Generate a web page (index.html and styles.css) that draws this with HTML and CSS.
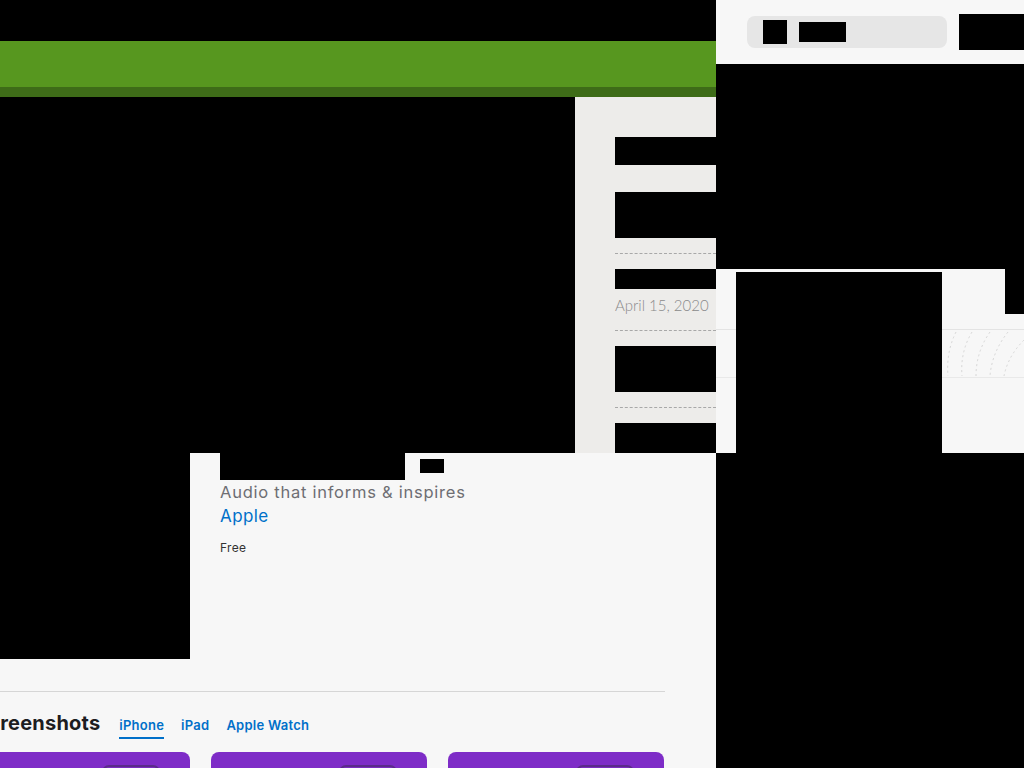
FILE: index.html
```html
<!DOCTYPE html>
<html lang="en">
<head>
<meta charset="utf-8">
<title>Collage</title>
<link rel="stylesheet" href="styles.css">
</head>
<body>
<div class="desk">
  <section class="tile banner">
    <div class="banner-main"></div>
    <div class="banner-foot"></div>
  </section>

  <section class="tile topbar">
    <div class="search">
      <span class="redact search-icon"></span>
      <span class="redact search-label"></span>
    </div>
    <span class="redact topbar-btn"></span>
  </section>

  <section class="tile sidebar">
    <div class="redact side-title"></div>
    <div class="redact side-block"></div>
    <div class="side-rule"></div>
    <div class="redact side-line"></div>
    <div class="side-date">April 15, 2020</div>
    <div class="side-rule"></div>
    <div class="redact side-block"></div>
    <div class="side-rule"></div>
    <div class="redact side-tail"></div>
  </section>

  <section class="tile media">
    <div class="redact media-corner"></div>
    <div class="media-band">
      <svg class="arcs" width="82" height="48" viewBox="0 0 82 48" aria-hidden="true">
        <g fill="none" stroke="#d6d6d6" stroke-width="1" stroke-dasharray="2 3">
          <path d="M14 2 Q4 22 6 46"/>
          <path d="M30 2 Q18 22 20 46"/>
          <path d="M48 2 Q34 22 34 46"/>
          <path d="M66 2 Q50 22 48 46"/>
          <path d="M82 10 Q66 26 62 46"/>
        </g>
      </svg>
    </div>
    <div class="redact media-photo"></div>
  </section>

  <section class="tile app">
    <div class="app-head">
      <div class="redact app-icon"></div>
      <div class="app-info">
        <div class="app-titlerow">
          <span class="redact app-title"></span>
          <span class="redact app-badge"></span>
        </div>
        <p class="app-sub">Audio that informs &amp; inspires</p>
        <a class="app-dev" href="#">Apple</a>
        <p class="app-price">Free</p>
      </div>
    </div>
    <hr class="app-rule">
    <div class="shots-head">
      <h2 class="shots-title">Screenshots</h2>
      <nav class="shots-tabs">
        <a class="tab active" href="#">iPhone</a>
        <a class="tab" href="#">iPad</a>
        <a class="tab" href="#">Apple Watch</a>
      </nav>
    </div>
    <div class="shots">
      <div class="shot first"><span class="notch"></span></div>
      <div class="shot"><span class="notch"></span></div>
      <div class="shot"><span class="notch"></span></div>
    </div>
  </section>
</div>
</body>
</html>
```

FILE: styles.css
```css
* { box-sizing: border-box; }
html, body { margin: 0; padding: 0; }
body {
  background: #000;
  width: 1024px;
  height: 768px;
  overflow: hidden;
  font-family: Inter, "Liberation Sans", sans-serif;
}
.desk { position: relative; width: 1024px; height: 768px; }
.tile { position: absolute; overflow: hidden; }
.redact { background: #000; display: block; }

/* green banner */
.banner { left: 0; top: 41px; width: 716px; height: 56px; display: flex; flex-direction: column; }
.banner-main { height: 46px; background: #57971f; }
.banner-foot { flex: 1; background: #3e6c18; }

/* top bar */
.topbar {
  left: 716px; top: 0; width: 308px; height: 64px;
  background: #f7f7f7;
  display: flex; align-items: flex-start;
  padding: 14px 0 0 31px; gap: 12px;
}
.search {
  margin-top: 2px;
  width: 200px; height: 32px; border-radius: 8px;
  background: #e6e6e6;
  display: flex; align-items: center; gap: 12px; padding-left: 16px;
}
.search-icon { width: 24px; height: 24px; }
.search-label { width: 47px; height: 20px; }
.topbar-btn { width: 65px; height: 36px; }

/* sidebar */
.sidebar {
  left: 575px; top: 97px; width: 141px; height: 356px;
  background: #edecea;
  padding: 40px 0 0 40px;
  display: flex; flex-direction: column;
}
.side-title { height: 28px; margin-bottom: 27px; flex: none; }
.side-block { height: 46px; flex: none; }
.side-rule { border-top: 1px dashed #a8a8a8; margin: 15px 0 15px; height: 0; flex: none; }
.side-line { height: 20px; flex: none; }
.side-date {
  font-family: Lato, sans-serif; font-weight: 300;
  font-size: 15px; color: #8a8a8a; line-height: 20px;
  margin: 6px 0 0; white-space: nowrap; flex: none;
}
.side-tail { height: 30px; flex: none; }

/* media tile */
.media {
  left: 716px; top: 269px; width: 308px; height: 184px;
  background: #f7f7f7;
}
.media-corner { position: absolute; right: 0; top: 0; width: 19px; height: 45px; }
.media-band {
  position: absolute; left: 0; right: 0; top: 60px; height: 49px;
  border-top: 1px solid #e4e4e4; border-bottom: 1px solid #e9e9e9;
  display: flex; justify-content: flex-end;
}
.arcs { display: block; }
.media-photo { position: absolute; left: 20px; top: 3px; width: 206px; height: 181px; }

/* app page */
.app {
  left: 0; top: 453px; width: 716px; height: 315px;
  background: #f7f7f7;
}
.app-head { display: flex; height: 206px; }
.app-icon { width: 190px; height: 206px; flex: none; }
.app-info { padding-left: 30px; }
.app-titlerow { display: flex; gap: 15px; }
.app-title { width: 185px; height: 27px; }
.app-badge { width: 24px; height: 14px; margin-top: 6px; }
.app-sub {
  margin: 0; font-size: 16.5px; line-height: 24px; color: #6e6e73;
  letter-spacing: 0.75px;
}
.app-dev {
  display: block; font-size: 17px; line-height: 24px; color: #0070c9; text-decoration: none;
  letter-spacing: 0.4px;
}
.app-price { margin: 12px 0 0; font-size: 12px; line-height: 16px; color: #333; letter-spacing: 0.3px; }
.app-rule { margin: 32px 0 0; width: 665px; border: 0; border-top: 1px solid #d6d6d6; }
.shots-head { display: flex; align-items: baseline; margin-top: 18px; height: 42px; }
.shots-title {
  margin: 0 0 0 -25px; font-size: 20px; font-weight: 700; color: #1d1d1f;
  letter-spacing: 0.2px; line-height: 26px; white-space: nowrap;
}
.shots-tabs { display: flex; gap: 17px; margin-left: 19px; }
.tab {
  font-size: 13px; font-weight: 600; color: #0070c9; text-decoration: none;
  padding-bottom: 3px; border-bottom: 2px solid transparent; line-height: 18px;
  letter-spacing: 0.25px;
}
.tab.active { border-bottom-color: #0070c9; }
.shots { display: flex; gap: 21px; margin-left: -26px; }
.shot {
  width: 216px; height: 40px; background: #7e2cc7;
  border-radius: 8px 8px 0 0; position: relative; flex: none;
}
.notch {
  position: absolute; left: 128px; top: 13px; width: 58px; height: 20px;
  border: 2px solid #5b2a8a; border-radius: 7px; background: #7a2cc0;
}
```
